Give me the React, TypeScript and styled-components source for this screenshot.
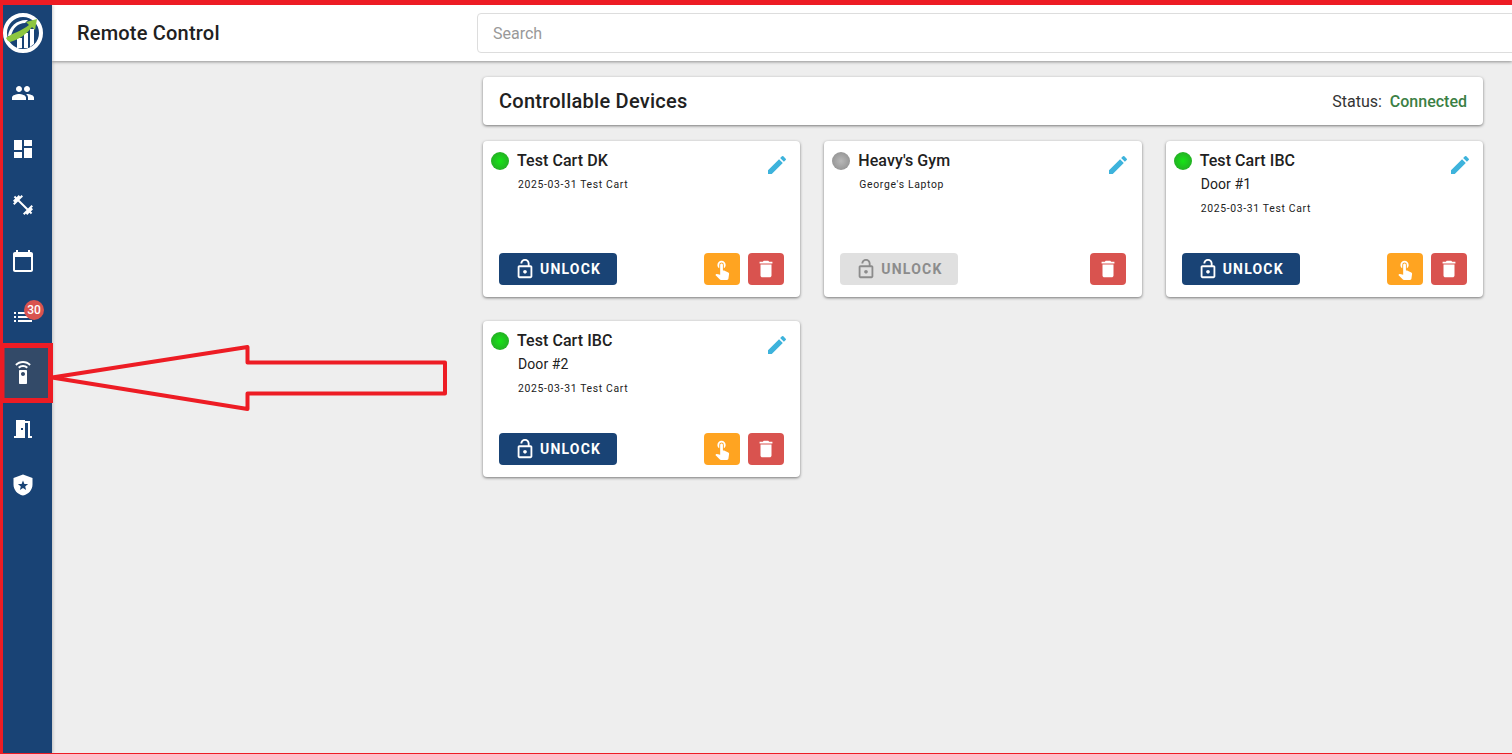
import styled, { createGlobalStyle } from "styled-components";
import {
  MdCalendarToday,
  MdDashboard,
  MdDelete,
  MdEdit,
  MdFitnessCenter,
  MdList,
  MdMeetingRoom,
  MdOutlineLockOpen,
  MdPeople,
  MdSettingsRemote,
  MdTouchApp,
} from "react-icons/md";
import type { ReactNode } from "react";

const GlobalStyle = createGlobalStyle`
  html, body {
    margin: 0;
    height: 100%;
    overflow: hidden;
  }

  body {
    font-family: Roboto, "Liberation Sans", sans-serif;
    color: #212121;
  }
`;

const Frame = styled.div`
  position: relative;
  display: flex;
  height: 754px;
  box-sizing: border-box;
  border-top: 5px solid #ed1c24;
  border-left: 3px solid #ed1c24;
  border-bottom: 1px solid #ed1c24;
  background: #eeeeee;
  overflow: hidden;
`;

const Sidebar = styled.nav`
  position: relative;
  z-index: 2;
  display: flex;
  flex-direction: column;
  flex: 0 0 49px;
  min-width: 0;
  background: #194375;
  box-shadow: 1px 0 3px rgba(0, 0, 0, 0.2);
`;

const LogoSlot = styled.div`
  display: flex;
  align-items: center;
  justify-content: center;
  height: 56px;
  margin-bottom: 4px;
  padding-right: 9px;
`;

const NavItem = styled.div<{ $active?: boolean }>`
  position: relative;
  display: flex;
  align-items: center;
  justify-content: center;
  height: 56px;
  padding-right: 9px;
  color: #ffffff;
  font-size: 24px;
  background: ${({ $active }) => ($active ? "#334a68" : "transparent")};

  svg {
    display: block;
  }
`;

const Badge = styled.span`
  position: absolute;
  top: 11px;
  left: 21px;
  width: 20px;
  height: 20px;
  border-radius: 50%;
  background: #d9534f;
  color: #ffffff;
  font-size: 12px;
  font-weight: 500;
  line-height: 20px;
  text-align: center;
`;

const Main = styled.div`
  flex: 1;
  min-width: 0;
  display: flex;
  flex-direction: column;
`;

const TopBar = styled.header`
  display: flex;
  align-items: center;
  flex: 0 0 56px;
  background: #ffffff;
  box-shadow: 0 1px 3px rgba(0, 0, 0, 0.4);
  overflow: hidden;
`;

const PageTitle = styled.h1`
  flex: 0 0 400px;
  margin: 0 0 0 25px;
  font-size: 20px;
  font-weight: 500;
  letter-spacing: 0.2px;
  line-height: 24px;
`;

const SearchBox = styled.div`
  flex: 0 0 1100px;
  height: 38px;
  padding-left: 15px;
  border: 1px solid #dddddd;
  border-radius: 4px;
  color: #999999;
  font-size: 16px;
  line-height: 39px;
`;

const Content = styled.main`
  display: flex;
  flex-direction: column;
  gap: 16px;
  width: 1000px;
  margin: 16px 0 0 431px;
`;

const DevicesHeader = styled.section`
  display: flex;
  align-items: center;
  justify-content: space-between;
  height: 48px;
  padding: 0 16px;
  background: #ffffff;
  border-radius: 4px;
  box-shadow: 0 1px 3px rgba(0, 0, 0, 0.5);
`;

const DevicesTitle = styled.h2`
  margin: 0;
  font-size: 20px;
  font-weight: 500;
  letter-spacing: 0.25px;
`;

const Status = styled.div`
  display: flex;
  gap: 8px;
  font-size: 16px;
  color: #333333;
`;

const Connected = styled.span`
  color: #3b7f45;
  font-weight: 500;
`;

const CardGrid = styled.div`
  display: grid;
  grid-template-columns: repeat(3, 1fr);
  gap: 24px;
`;

const Card = styled.article`
  position: relative;
  display: flex;
  flex-direction: column;
  height: 156px;
  box-sizing: border-box;
  padding: 9px 16px 12px 8px;
  background: #ffffff;
  border-radius: 4px;
  box-shadow: 0 1px 3px rgba(0, 0, 0, 0.5);
`;

const CardHeading = styled.div`
  display: flex;
  align-items: center;
  gap: 8px;
  height: 22px;
`;

const Dot = styled.span<{ $online: boolean }>`
  flex: 0 0 18px;
  height: 18px;
  border-radius: 50%;
  background: ${({ $online }) =>
    $online
      ? "radial-gradient(circle, #16e416 0%, #2a9c2a 100%)"
      : "radial-gradient(circle, #b8b8b8 0%, #8a8a8a 100%)"};
`;

const CardTitle = styled.h3`
  margin: 0;
  font-size: 16px;
  font-weight: 500;
  letter-spacing: 0.06px;
  line-height: 22px;
`;

const EditIcon = styled.span`
  position: absolute;
  top: 12px;
  right: 11.5px;
  color: #3db3dc;
  font-size: 24px;
  line-height: 0;
`;

const Door = styled.div`
  margin: 2px 0 2px 27px;
  font-size: 14px;
  letter-spacing: 0.1px;
  line-height: 20px;
`;

const Detail = styled.div`
  margin: 5px 0 0 27px;
  font-size: 10.4px;
  letter-spacing: 0.67px;
  line-height: 16px;
`;

const Actions = styled.div`
  display: flex;
  gap: 8px;
  margin-top: auto;
  margin-left: 8px;
`;

const UnlockButton = styled.button<{ $disabled?: boolean }>`
  display: flex;
  align-items: center;
  justify-content: flex-start;
  gap: 4px;
  width: 118px;
  height: 32px;
  margin-right: auto;
  padding: 0 0 0 15px;
  border: 0;
  border-radius: 4px;
  background: ${({ $disabled }) => ($disabled ? "#e0e0e0" : "#194375")};
  color: ${({ $disabled }) => ($disabled ? "#8c8c8c" : "#ffffff")};
  font-family: inherit;
  font-size: 14px;
  font-weight: 700;
  letter-spacing: 1.2px;
`;

const IconButton = styled.button<{ $tone: "orange" | "red" }>`
  display: flex;
  align-items: center;
  justify-content: center;
  width: 36px;
  height: 32px;
  padding: 0;
  border: 0;
  border-radius: 4px;
  background: ${({ $tone }) => ($tone === "orange" ? "#ffa421" : "#d9534f")};
  color: #ffffff;
  font-size: 22px;
`;

const Annotation = styled.svg`
  position: absolute;
  z-index: 3;
  top: -5px;
  left: -3px;
  pointer-events: none;
`;

function Logo() {
  return (
    <svg width="40" height="40" viewBox="0 0 40 40">
      <circle cx="20" cy="20" r="18" fill="#194375" stroke="#ffffff" strokeWidth="4" />
      <path d="M5 23C6 13 15 6 25 7l-3 3C15 10 10 15 8 23z" fill="#ffffff" />
      <path d="M14 25h5v10h-5zM21 20h4v15h-4zM27 16h4v15l-4 3z" fill="#ffffff" />
      <path
        d="M3 25C9 20 19 18 26 12l-3-3 11-3-2 11-3-3C24 21 15 27 7 29 5 28 4 27 3 25z"
        fill="#8dc63f"
      />
    </svg>
  );
}

function ShieldStar() {
  return (
    <svg width="24" height="24" viewBox="0 0 24 24" fill="currentColor">
      <path
        fillRule="evenodd"
        d="M12 1.500 2.500 5v6.500c0 5.400 4 10 9.500 11 5.500-1 9.500-5.600 9.500-11V5L12 1.500zm0 6 1.400 3.400 3.700.2-2.900 2.400.9 3.600-3.100-2-3.100 2 .9-3.600-2.900-2.400 3.700-.2L12 7.500z"
      />
    </svg>
  );
}

type Device = {
  name: string;
  door?: string;
  detail: string;
  online: boolean;
};

const devices: Device[] = [
  { name: "Test Cart DK", detail: "2025-03-31 Test Cart", online: true },
  { name: "Heavy's Gym", detail: "George's Laptop", online: false },
  { name: "Test Cart IBC", door: "Door #1", detail: "2025-03-31 Test Cart", online: true },
  { name: "Test Cart IBC", door: "Door #2", detail: "2025-03-31 Test Cart", online: true },
];

const navItems: { key: string; icon: ReactNode; badge?: number; active?: boolean }[] = [
  { key: "people", icon: <MdPeople /> },
  { key: "dashboard", icon: <MdDashboard /> },
  { key: "fitness", icon: <MdFitnessCenter /> },
  { key: "calendar", icon: <MdCalendarToday /> },
  { key: "list", icon: <MdList />, badge: 30 },
  { key: "remote", icon: <MdSettingsRemote />, active: true },
  { key: "door", icon: <MdMeetingRoom /> },
  { key: "shield", icon: <ShieldStar /> },
];

function DeviceCard({ device }: { device: Device }) {
  const { name, door, detail, online } = device;

  return (
    <Card>
      <CardHeading>
        <Dot $online={online} />
        <CardTitle>{name}</CardTitle>
      </CardHeading>
      <EditIcon>
        <MdEdit />
      </EditIcon>
      {door && <Door>{door}</Door>}
      <Detail>{detail}</Detail>
      <Actions>
        <UnlockButton $disabled={!online}>
          <MdOutlineLockOpen size={22} />
          <span>UNLOCK</span>
        </UnlockButton>
        {online && (
          <IconButton $tone="orange">
            <MdTouchApp />
          </IconButton>
        )}
        <IconButton $tone="red">
          <MdDelete />
        </IconButton>
      </Actions>
    </Card>
  );
}

export default function App() {
  return (
    <>
      <GlobalStyle />
      <Frame>
        <Sidebar>
          <LogoSlot>
            <Logo />
          </LogoSlot>
          {navItems.map((item) => (
            <NavItem key={item.key} $active={item.active}>
              {item.icon}
              {item.badge && <Badge>{item.badge}</Badge>}
            </NavItem>
          ))}
        </Sidebar>
        <Main>
          <TopBar>
            <PageTitle>Remote Control</PageTitle>
            <SearchBox>Search</SearchBox>
          </TopBar>
          <Content>
            <DevicesHeader>
              <DevicesTitle>Controllable Devices</DevicesTitle>
              <Status>
                <span>Status:</span>
                <Connected>Connected</Connected>
              </Status>
            </DevicesHeader>
            <CardGrid>
              {devices.map((device) => (
                <DeviceCard key={device.name + device.door} device={device} />
              ))}
            </CardGrid>
          </Content>
        </Main>
        <Annotation width="1512" height="754">
          <rect x="2" y="345.5" width="48.5" height="55" fill="none" stroke="#ed1c24" strokeWidth="5" />
          <polygon
            points="52,377.5 247.5,347 247.5,362.5 445,362.5 445,393.5 247.5,393.5 247.5,409 52,377.5"
            fill="none"
            stroke="#ed1c24"
            strokeWidth="4"
            strokeLinejoin="round"
          />
        </Annotation>
      </Frame>
    </>
  );
}
